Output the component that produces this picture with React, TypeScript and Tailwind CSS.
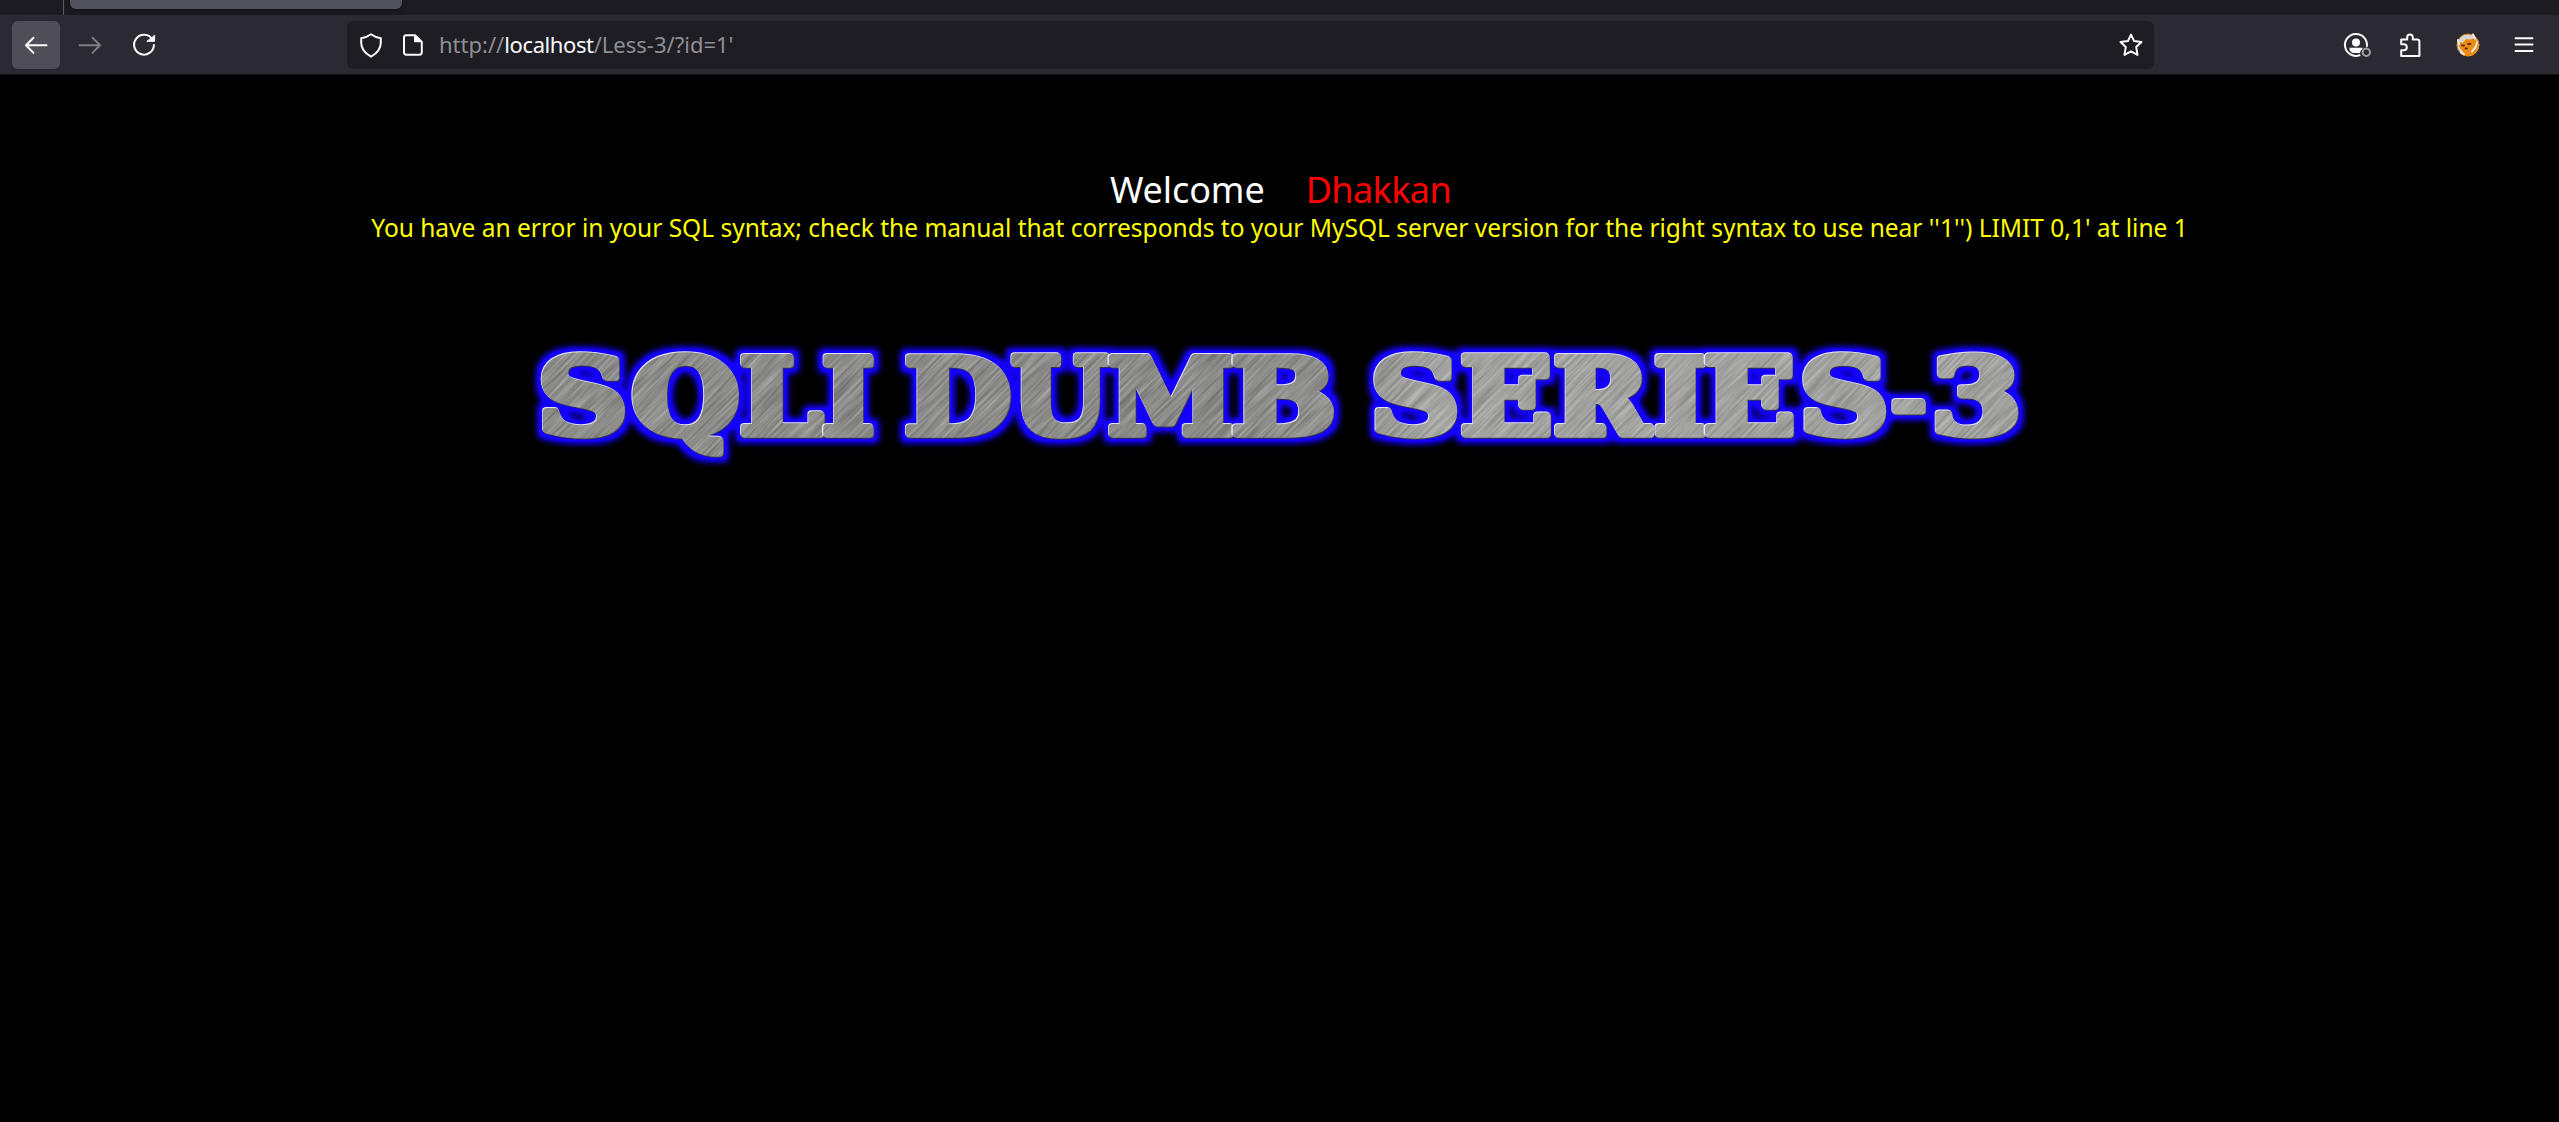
import type { ReactNode } from "react";

type Glyph = { ch: string; x0: number; x1: number; l: number; r: number };

const EDGE = 4;
const TOP = 354;
const BASE = 438;

/* Target left and right edges of every banner letter, with the ink bounds of its glyph per 1000 units. */
const GLYPHS: Glyph[] = [
  { ch: "S", x0: 541.5, x1: 626, l: 63, r: 672 },
  { ch: "Q", x0: 633, x1: 738.5, l: 45, r: 828 },
  { ch: "L", x0: 741, x1: 825, l: 47, r: 688 },
  { ch: "I", x0: 823.5, x1: 873.5, l: 47, r: 422 },
  { ch: "D", x0: 906, x1: 1009.5, l: 47, r: 820 },
  { ch: "U", x0: 1011, x1: 1111, l: 31, r: 859 },
  { ch: "M", x0: 1108.5, x1: 1234, l: 37, r: 1063 },
  { ch: "B", x0: 1233, x1: 1333.5, l: 47, r: 790 },
  { ch: "S", x0: 1374, x1: 1458, l: 63, r: 672 },
  { ch: "E", x0: 1462, x1: 1551, l: 47, r: 715 },
  { ch: "R", x0: 1555, x1: 1655, l: 47, r: 844 },
  { ch: "I", x0: 1655.5, x1: 1706, l: 47, r: 422 },
  { ch: "E", x0: 1705.5, x1: 1794, l: 47, r: 715 },
  { ch: "S", x0: 1803, x1: 1887, l: 63, r: 672 },
  { ch: "-", x0: 1892, x1: 1926, l: 47, r: 370 },
  { ch: "3", x0: 1935, x1: 2019, l: 63, r: 641 },
];

function Letter({ g, id }: { g: Glyph; id: string }) {
  const sx = (g.x1 - g.x0 - EDGE * 2) / (g.r - g.l);
  const dash = g.ch === "-";
  const sy = dash ? 0.064 : (BASE - TOP - EDGE * 2) / 729;
  const tx = g.x0 + EDGE - g.l * sx;
  const ty = dash ? 424 : BASE - EDGE;
  return (
    <text
      id={id}
      transform={`translate(${tx} ${ty}) scale(${sx} ${sy})`}
      fontSize={1000}
      fontWeight={700}
      fill="currentColor"
      stroke="currentColor"
      strokeWidth={EDGE * 2}
      strokeLinejoin="round"
      vectorEffect="non-scaling-stroke"
      className="font-['DejaVu_Serif',serif]"
    >
      {g.ch}
    </text>
  );
}

function Banner() {
  return (
    <svg width="1520" height="170" viewBox="520 320 1520 170" className="block" role="img" aria-label="SQLI DUMB SERIES-3">
      <defs>
        <filter id="glow" filterUnits="userSpaceOnUse" x="520" y="320" width="1520" height="170" colorInterpolationFilters="sRGB">
          <feMorphology operator="dilate" radius="5" />
          <feGaussianBlur stdDeviation="3" />
          <feComponentTransfer>
            <feFuncA type="linear" slope="1.25" />
          </feComponentTransfer>
        </filter>
        <filter id="brushed" x="0" y="0" width="1" height="1" colorInterpolationFilters="sRGB">
          <feTurbulence type="fractalNoise" baseFrequency="0.02 0.42" numOctaves="2" seed="4" />
          <feColorMatrix values="0.36 0 0 0 0.38  0.36 0 0 0 0.38  0.36 0 0 0 0.37  0 0 0 0 1" />
        </filter>
        <linearGradient id="sheen" x1="0" x2="1" y1="0" y2="0">
          <stop offset="0" stopColor="#000" stopOpacity="0.02" />
          <stop offset="0.4" stopColor="#000" stopOpacity="0.03" />
          <stop offset="0.6" stopColor="#fff" stopOpacity="0.17" />
          <stop offset="1" stopColor="#fff" stopOpacity="0.15" />
        </linearGradient>
        <mask id="letters" maskUnits="userSpaceOnUse" x="520" y="320" width="1520" height="170">
          {GLYPHS.map((_, i) => (
            <g key={i}>
              <use href={`#letter-${i}`} x={-1.5} y={-1.5} className="text-black" />
              <use href={`#letter-${i}`} className="text-white" />
            </g>
          ))}
        </mask>
      </defs>
      <g filter="url(#glow)" className="text-[#1400ff]">
        {GLYPHS.map((g, i) => (
          <Letter key={i} g={g} id={`letter-${i}`} />
        ))}
      </g>
      <g className="text-[#34344c]">
        {GLYPHS.map((_, i) => (
          <use key={i} href={`#letter-${i}`} x={0.7} y={0.7} />
        ))}
      </g>
      <g className="text-[#e4e4f4]">
        {GLYPHS.map((_, i) => (
          <use key={i} href={`#letter-${i}`} x={-0.8} y={-0.8} />
        ))}
      </g>
      <g mask="url(#letters)">
        <rect x="520" y="-400" width="1520" height="1500" transform="rotate(-45 1280 400)" filter="url(#brushed)" />
        <rect x="520" y="320" width="1520" height="170" fill="url(#sheen)" />
      </g>
    </svg>
  );
}

function Icon({ children, className = "" }: { children: ReactNode; className?: string }) {
  return (
    <svg width="30" height="30" viewBox="0 0 30 30" fill="none" stroke="currentColor" strokeWidth="2" strokeLinecap="round" strokeLinejoin="round" className={`block shrink-0 ${className}`}>
      {children}
    </svg>
  );
}

function Toolbar() {
  return (
    <div className="flex h-[60px] items-center border-b border-[#15141a] bg-[#2b2a33] pl-3 text-[#fbfbfe]">
      <button className="flex size-12 items-center justify-center rounded-[6px] bg-[#4f4e58]">
        <Icon>
          <path d="M5 15.3H25.5M12.5 7.7L5 15.3l7.5 7.6" />
        </Icon>
      </button>
      <button className="ml-1.5 flex size-12 items-center justify-center text-[#7d7c83]">
        <Icon>
          <path d="M4.5 15.3H25M17.5 7.7L25 15.3l-7.5 7.6" />
        </Icon>
      </button>
      <button className="ml-1.5 flex size-12 items-center justify-center">
        <Icon>
          <path d="M23.3 9.3A9.9 9.9 0 1 0 24.9 15" />
          <path d="M25.6 5.7V11.3H18.2Z" fill="currentColor" strokeWidth="1" />
        </Icon>
      </button>
      <div className="ml-[179px] flex h-12 w-[1807px] items-center rounded-[6px] bg-[#1e1d24] pr-2">
        <Icon className="ml-[9px]">
          <path d="M15 4.2c2.7 2 6 3.3 9.8 4.1v4.4c0 5.7-3.7 10.5-9.8 14C8.900 23.200 5.200 18.400 5.200 12.700V8.300C9 7.500 12.300 6.200 15 4.200Z" />
        </Icon>
        <Icon className="ml-3">
          <path d="M8.400 5.200H17L23.800 12v10.300a2.400 2.400 0 0 1-2.400 2.400H8.400A2.400 2.400 0 0 1 6 22.300V7.600a2.400 2.400 0 0 1 2.400-2.400Z" />
          <path d="M16.700 5.500V11.500H23.300Z" fill="currentColor" strokeWidth="1.400" />
        </Icon>
        <div className="-mt-px ml-[11px] flex-1 whitespace-pre text-[22px] leading-[30px] text-[#8f8e95] font-['Noto_Sans',sans-serif]">
          <span>http://</span>
          <span className="tracking-[-0.4px] text-[#fbfbfe]">localhost</span>
          <span>/Less-3/?id=1'</span>
        </div>
        <Icon>
          <path d="M15 4.600l3.100 6.500 7.400.9-5.300 4.900 1.300 8-6.500-3.500-6.500 3.500 1.300-8L4.500 12l7.400-.9Z" />
        </Icon>
      </div>
      <Icon className="ml-[187px]">
        <path d="M18.500 25.300A11 11 0 1 1 25.900 16" />
        <circle cx="15" cy="12.500" r="4" fill="currentColor" stroke="none" />
        <path d="M8.500 17.700h13v.8c0 .7-1.400 1.600-1.900 2.600-.4.800-.3 1.500-.6 1.900H12c-1.600-.6-3.500-2.200-3.500-4.100Z" fill="currentColor" stroke="none" />
        <circle cx="25.300" cy="22.300" r="3.700" fill="#2b2a33" stroke="#a09fa6" />
      </Icon>
      <Icon className="ml-[25px]">
        <path d="M5.200 9.600h6V7.300a2.800 2.800 0 0 1 5.600 0v2.300h4.600a2 2 0 0 1 2 2V25.900H5.200v-5.600h2.600a3 3 0 0 0 0-6H5.200Z" />
      </Icon>
      <Icon className="ml-[27px]">
        <circle cx="15" cy="15" r="11" fill="#d8d5d0" stroke="#c98328" strokeWidth="1" />
        <path d="M5.500 11.500l4 1.500 3.500-4 5 .5 4-2 1.500 4.500 1.500 1c.8 5-1.500 9.500-5 12-4 2-9 1.500-12-1l2-3c-3-1.500-4.500-5-4.500-9.500Z" fill="#ee8a10" stroke="none" />
        <path d="M20 4.500l2 4M24 13l-2 5-3 3.500" stroke="#efebe4" />
        <path d="M9 15.500h2M15 14h2.500M12.500 18.500h1.500" stroke="#5b3510" strokeWidth="1.800" />
        <path d="M5 10l1 4M8 22.500l3 1.500" stroke="#f2eee8" />
      </Icon>
      <Icon className="ml-[26px]">
        <path d="M6.500 8.200h17M6.500 14.600h17M6.500 21h17" />
      </Icon>
    </div>
  );
}

function TabStrip() {
  return (
    <div className="flex h-[15px] items-start bg-[#1c1b22]">
      <div className="ml-[63px] h-[15px] w-px bg-[#5b5a63]" />
      <div className="ml-[6px] h-[9px] w-[332px] rounded-b-[6px] bg-[#52525e] shadow-[0_1px_4px_rgba(0,0,0,0.6)]" />
    </div>
  );
}

export default function App() {
  return (
    <div className="flex h-[1122px] w-[2559px] flex-col overflow-hidden bg-black">
      <TabStrip />
      <Toolbar />
      <main className="flex flex-col items-center pt-[93px] font-['Noto_Sans',sans-serif]">
        <h1 className="flex h-[43px] items-center gap-[41px] pl-[2px] text-[36px] leading-[50px]">
          <span className="text-white tracking-[-0.1px]">Welcome</span>
          <span className="text-[#ff0000] tracking-[-0.600px]">Dhakkan</span>
        </h1>
        <p className="h-[34px] whitespace-pre text-[24.500px] leading-[34px] text-[#ffff00]">
          You have an error in your SQL syntax; check the manual that corresponds to your MySQL server version for the right syntax to use near ''1'') LIMIT 0,1' at line 1
        </p>
        <div className="mt-[75px]">
          <Banner />
        </div>
      </main>
    </div>
  );
}
